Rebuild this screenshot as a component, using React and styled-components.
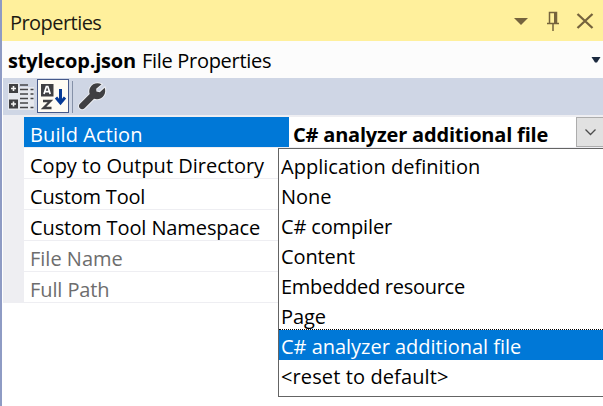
import React from "react";
import styled, { createGlobalStyle } from "styled-components";

const GlobalStyle = createGlobalStyle`
  * { box-sizing: border-box; }
  body { margin: 0; overflow: hidden; background: #fff; }
`;

const Panel = styled.div`
  width: 603px;
  height: 406px;
  overflow: hidden;
  display: flex;
  flex-direction: column;
  border-left: 2px solid #8e9bc4;
  background: #fff;
  color: #000;
  font: 20px/30px "Open Sans", "Noto Sans", sans-serif;
  white-space: pre;
`;

const Label = styled.span`
  letter-spacing: ${(p) => p.$spacing || 0}px;
  font-weight: ${(p) => (p.$bold ? 700 : 400)};
`;

const TitleBar = styled.header`
  display: flex;
  flex: none;
  height: 41px;
  padding: 8px 0 0 8px;
  background: #fff09c;
  color: #1c1a12;
`;

const TitleButtons = styled.div`
  display: flex;
  margin: -8px 0 0 auto;
`;

const ObjectBar = styled.div`
  display: flex;
  flex: none;
  height: 37px;
  padding: 5px 0 0 6px;
  background: #fcfcfc;
`;

const ObjectArrow = styled.svg`
  margin: 7px 2px 0 auto;
`;

const ObjectKind = styled(Label)`
  margin-left: 6px;
`;

const Toolbar = styled.div`
  display: flex;
  flex: none;
  height: 37px;
  margin-left: 1px;
  padding-top: 1px;
  background: #cfd6e5;
`;

const ToolButton = styled.button`
  display: block;
  flex: none;
  width: ${(p) => p.$width}px;
  height: 34px;
  padding: 0;
  border: 1px solid ${(p) => (p.$active ? "#46598a" : "transparent")};
  background: ${(p) => (p.$active ? "#fffcf4" : "transparent")};
  svg { display: block; }
`;

const Separator = styled.i`
  width: 1px;
  height: 32px;
  margin: 2px 2px 0 3px;
  background: #8591a8;
`;

const Grid = styled.main`
  position: relative;
  flex: none;
  margin-left: 1px;
  padding: 2px 0 0 21px;
  background: #eeeef2;
`;

const Row = styled.div`
  display: grid;
  grid-template-columns: 265px 1fr;
  height: 31px;
  border-bottom: 1px solid #eeeef2;
  background: #fff;
`;

const Name = styled.div`
  padding: 3px 0 0 6px;
  height: 30px;
  background: ${(p) => (p.$selected ? "#0078d7" : "#fff")};
  color: ${(p) => (p.$selected ? "#fff" : p.$readOnly ? "#6d6d6d" : "#000")};
`;

const Value = styled.div`
  display: flex;
  height: 30px;
  padding: 3px 0 0 4px;
`;

const DropButton = styled.button`
  width: 27px;
  height: 30px;
  margin: -3px 0 0 auto;
  padding: 0;
  border: 1px solid #adadad;
  border-right: 0;
  background: #e1e1e1;
  svg { display: block; }
`;

const Menu = styled.ul`
  position: absolute;
  top: 33px;
  left: 275px;
  right: 0;
  height: 249px;
  margin: 0;
  padding: 1px 0 0;
  list-style: none;
  border: 1px solid #646464;
  border-right: 0;
  background: #fff;
`;

const Option = styled.li`
  height: ${(p) => (p.$selected ? 31 : 30)}px;
  margin-top: ${(p) => (p.$selected ? -1 : 0)}px;
  padding: 2px 0 0 2px;
  border-top: ${(p) => (p.$selected ? "1px dotted #000" : "0")};
  background: ${(p) => (p.$selected ? "#0078d7" : "transparent")};
  background-clip: padding-box;
  color: ${(p) => (p.$selected ? "#fff" : "#000")};
`;

const properties = [
  { name: "Build Action", spacing: 0.1, selected: true, value: "C# analyzer additional file" },
  { name: "Copy to Output Directory", spacing: 0 },
  { name: "Custom Tool", spacing: -0.2 },
  { name: "Custom Tool Namespace", spacing: -0.1 },
  { name: "File Name", spacing: 0, readOnly: true },
  { name: "Full Path", spacing: -0.1, readOnly: true },
];

const options = [
  { text: "Application definition", spacing: 0.03 },
  { text: "None", spacing: 0 },
  { text: "C# compiler", spacing: -0.14 },
  { text: "Content", spacing: -0.1 },
  { text: "Embedded resource", spacing: -0.27 },
  { text: "Page", spacing: -0.1 },
  { text: "C# analyzer additional file", spacing: -0.02, selected: true },
  { text: "<reset to default>", spacing: 0.11 },
];

const WindowIcons = () => (
  <svg width="94" height="41" viewBox="509 0 94 41" fill="none" stroke="#75633d">
    <path d="M514 18h14l-7 7z" fill="#75633d" stroke="none" />
    <path d="M549.5 23V12.500H556.500V23M547 23.500H559M553 24V31" strokeWidth="1.500" />
    <path d="M555.500 12V23" strokeWidth="3" />
    <path d="M577.500 14L592.500 28M592.500 14L577.500 28" strokeWidth="2.300" />
  </svg>
);

const CategorizedIcon = () => (
  <svg width="32" height="32" viewBox="4 80 32 32" fill="none">
    <path d="M8 83h11v4h15v23H8z" fill="#e6e8ee" />
    <path d="M9 84h9v9H9zM9 99.500h9v9H9z" fill="#3f3f42" />
    <path d="M11 88.500h5M13.500 86v5M11 104h5M13.500 101.500v5" stroke="#f4f4f4" strokeWidth="1.600" />
    <path d="M20 85h8M20 89.500h8M20 94h8M20 98.500h8M20 103h8M20 107.500h8M30.500 89.500h3M30.500 94h3M30.500 98.500h3M30.500 107.500h3" stroke="#454548" strokeWidth="1.500" />
  </svg>
);

const SortIcon = () => (
  <svg width="30" height="32" viewBox="38 80 30 32" fill="none">
    <path d="M41 84h12.500v12.500H41z" fill="#3f3f42" />
    <path d="M44 94l2.400-7.500h1.400L50.200 94M45 91.700h4.300" stroke="#fff" strokeWidth="1.700" />
    <path d="M43 101h7.500l-7 7H51.500" stroke="#3f3f42" strokeWidth="2.300" />
    <path d="M60.500 89v14M56 97.500l4.500 5.500 4.500-5.500" stroke="#063a96" strokeWidth="3" />
  </svg>
);

const WrenchIcon = () => (
  <svg width="32" height="32" viewBox="75 80 32 32">
    <path
      d="M100.500 84.300C96.500 82.300 91.300 83.500 89.100 87.700 88.100 89.800 88 92.100 88.700 94.100L79 103.800C77.600 105.200 77.600 107 78.900 108.300 80.200 109.600 82.200 109.500 83.500 108.200L93 98.700C96.800 100 100.900 98.700 103 95.300 104.400 93.100 104.500 90.100 103.700 87.800L98.800 92.200 95.400 91.600 95.200 88.800z"
      fill="#3f3f42"
      stroke="#eceef2"
      strokeWidth="2"
      paintOrder="stroke"
    />
  </svg>
);

export default function App() {
  return (
    <>
      <GlobalStyle />
      <Panel>
        <TitleBar>
          <Label $spacing={-0.55}>Properties</Label>
          <TitleButtons><WindowIcons /></TitleButtons>
        </TitleBar>
        <ObjectBar>
          <Label $bold $spacing={-0.198}>stylecop.json</Label>
          <ObjectKind $spacing={-0.295}>File Properties</ObjectKind>
          <ObjectArrow width="10" height="12" viewBox="0 0 10 12">
            <path d="M0.500 4h9L6 9.500H4z" fill="#1b293e" />
          </ObjectArrow>
        </ObjectBar>
        <Toolbar>
          <ToolButton $width={34}><CategorizedIcon /></ToolButton>
          <ToolButton $width={32} $active><SortIcon /></ToolButton>
          <Separator />
          <ToolButton $width={34}><WrenchIcon /></ToolButton>
        </Toolbar>
        <Grid>
          {properties.map((p) => (
            <Row key={p.name}>
              <Name $selected={p.selected} $readOnly={p.readOnly}>
                <Label $spacing={p.spacing}>{p.name}</Label>
              </Name>
              {p.value && (
                <Value>
                  <Label $bold $spacing={-0.2}>{p.value}</Label>
                  <DropButton>
                    <svg width="26" height="28" viewBox="0 0 26 28">
                      <path d="M8.500 11.500L13.500 16.500L18.500 11.500" fill="none" stroke="#4c4c4c" strokeWidth="1.300" />
                    </svg>
                  </DropButton>
                </Value>
              )}
            </Row>
          ))}
          <Menu>
            {options.map((o) => (
              <Option key={o.text} $selected={o.selected}>
                <Label $spacing={o.spacing}>{o.text}</Label>
              </Option>
            ))}
          </Menu>
        </Grid>
      </Panel>
    </>
  );
}
